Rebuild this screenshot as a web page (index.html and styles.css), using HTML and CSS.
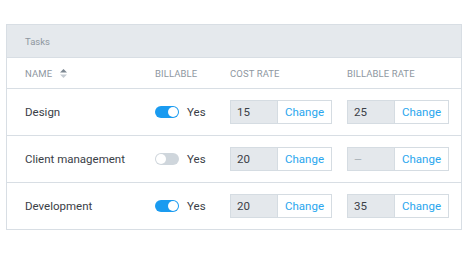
FILE: index.html
```html
<!DOCTYPE html>
<html>
<head>
<meta charset="utf-8">
<link rel="stylesheet" href="styles.css">
</head>
<body>
<div class="card">
  <div class="card-title">Tasks</div>
  <div class="row head">
    <div class="cell name-h">NAME
      <svg class="sort" width="7" height="9" viewBox="0 0 7 9"><path d="M3.5 0 L7 3.6 H0 Z" fill="#7c8791"/><path d="M3.5 9 L7 5.4 H0 Z" fill="#c4cbd2"/></svg>
    </div>
    <div class="cell">BILLABLE</div>
    <div class="cell">COST RATE</div>
    <div class="cell">BILLABLE RATE</div>
  </div>
  <div class="row">
    <div class="cell task">Design</div>
    <div class="cell"><span class="toggle on"><span class="knob"></span></span><span class="yes">Yes</span></div>
    <div class="cell"><div class="rate"><span class="val">15</span><span class="btn">Change</span></div></div>
    <div class="cell"><div class="rate"><span class="val">25</span><span class="btn">Change</span></div></div>
  </div>
  <div class="row">
    <div class="cell task">Client management</div>
    <div class="cell"><span class="toggle"><span class="knob"></span></span><span class="yes">Yes</span></div>
    <div class="cell"><div class="rate"><span class="val">20</span><span class="btn">Change</span></div></div>
    <div class="cell"><div class="rate"><span class="val dash">—</span><span class="btn">Change</span></div></div>
  </div>
  <div class="row last">
    <div class="cell task">Development</div>
    <div class="cell"><span class="toggle on"><span class="knob"></span></span><span class="yes">Yes</span></div>
    <div class="cell"><div class="rate"><span class="val">20</span><span class="btn">Change</span></div></div>
    <div class="cell"><div class="rate"><span class="val">35</span><span class="btn">Change</span></div></div>
  </div>
</div>
</body>
</html>
```
FILE: styles.css
```css
* { box-sizing: border-box; }
body {
  margin: 0;
  padding: 24px 8px 0 6px;
  background: #fff;
  font-family: Roboto, "Liberation Sans", sans-serif;
  color: #333a40;
}
.card {
  width: 456px;
  border: 1px solid #d8dee4;
}
.card-title {
  height: 33px;
  background: #e5e9ed;
  border-bottom: 1px solid #d8dee4;
  font-size: 9.5px;
  color: #8e979f;
  padding-left: 18px;
  display: flex;
  align-items: center;
}
.row {
  display: grid;
  grid-template-columns: 130px 75px 117px 1fr;
  padding-left: 18px;
  height: 47px;
  border-bottom: 1px solid #d8dee4;
  align-items: center;
}
.row.last { border-bottom: none; height: 46px; }
.row.head {
  height: 31px;
  font-size: 9.5px;
  color: #8e979f;
  letter-spacing: 0.1px;
}
.cell { display: flex; align-items: center; }
.sort { margin-left: 8px; }
.task { font-size: 11.5px; color: #3a4047; }
.toggle {
  width: 24px;
  height: 12px;
  border-radius: 6px;
  background: #cfd6dc;
  position: relative;
  display: inline-block;
}
.toggle.on { background: #1a9bf0; }
.knob {
  position: absolute;
  top: 1px;
  left: 1px;
  width: 10px;
  height: 10px;
  border-radius: 50%;
  background: #fff;
}
.toggle.on .knob { left: 13px; }
.yes { margin-left: 8px; font-size: 11.5px; color: #3a4047; }
.rate {
  display: flex;
  width: 102px;
  height: 24px;
  border: 1px solid #d5dce2;
}
.val {
  width: 47px;
  background: #e4e8ec;
  border-right: 1px solid #d5dce2;
  font-size: 11.5px;
  color: #3a4047;
  display: flex;
  align-items: center;
  padding-left: 6px;
}
.val.dash { color: #a9b1b8; font-size: 10px; }
.btn {
  flex: 1;
  display: flex;
  align-items: center;
  justify-content: center;
  font-size: 11.5px;
  color: #2aa6ee;
  background: #fff;
}
```
